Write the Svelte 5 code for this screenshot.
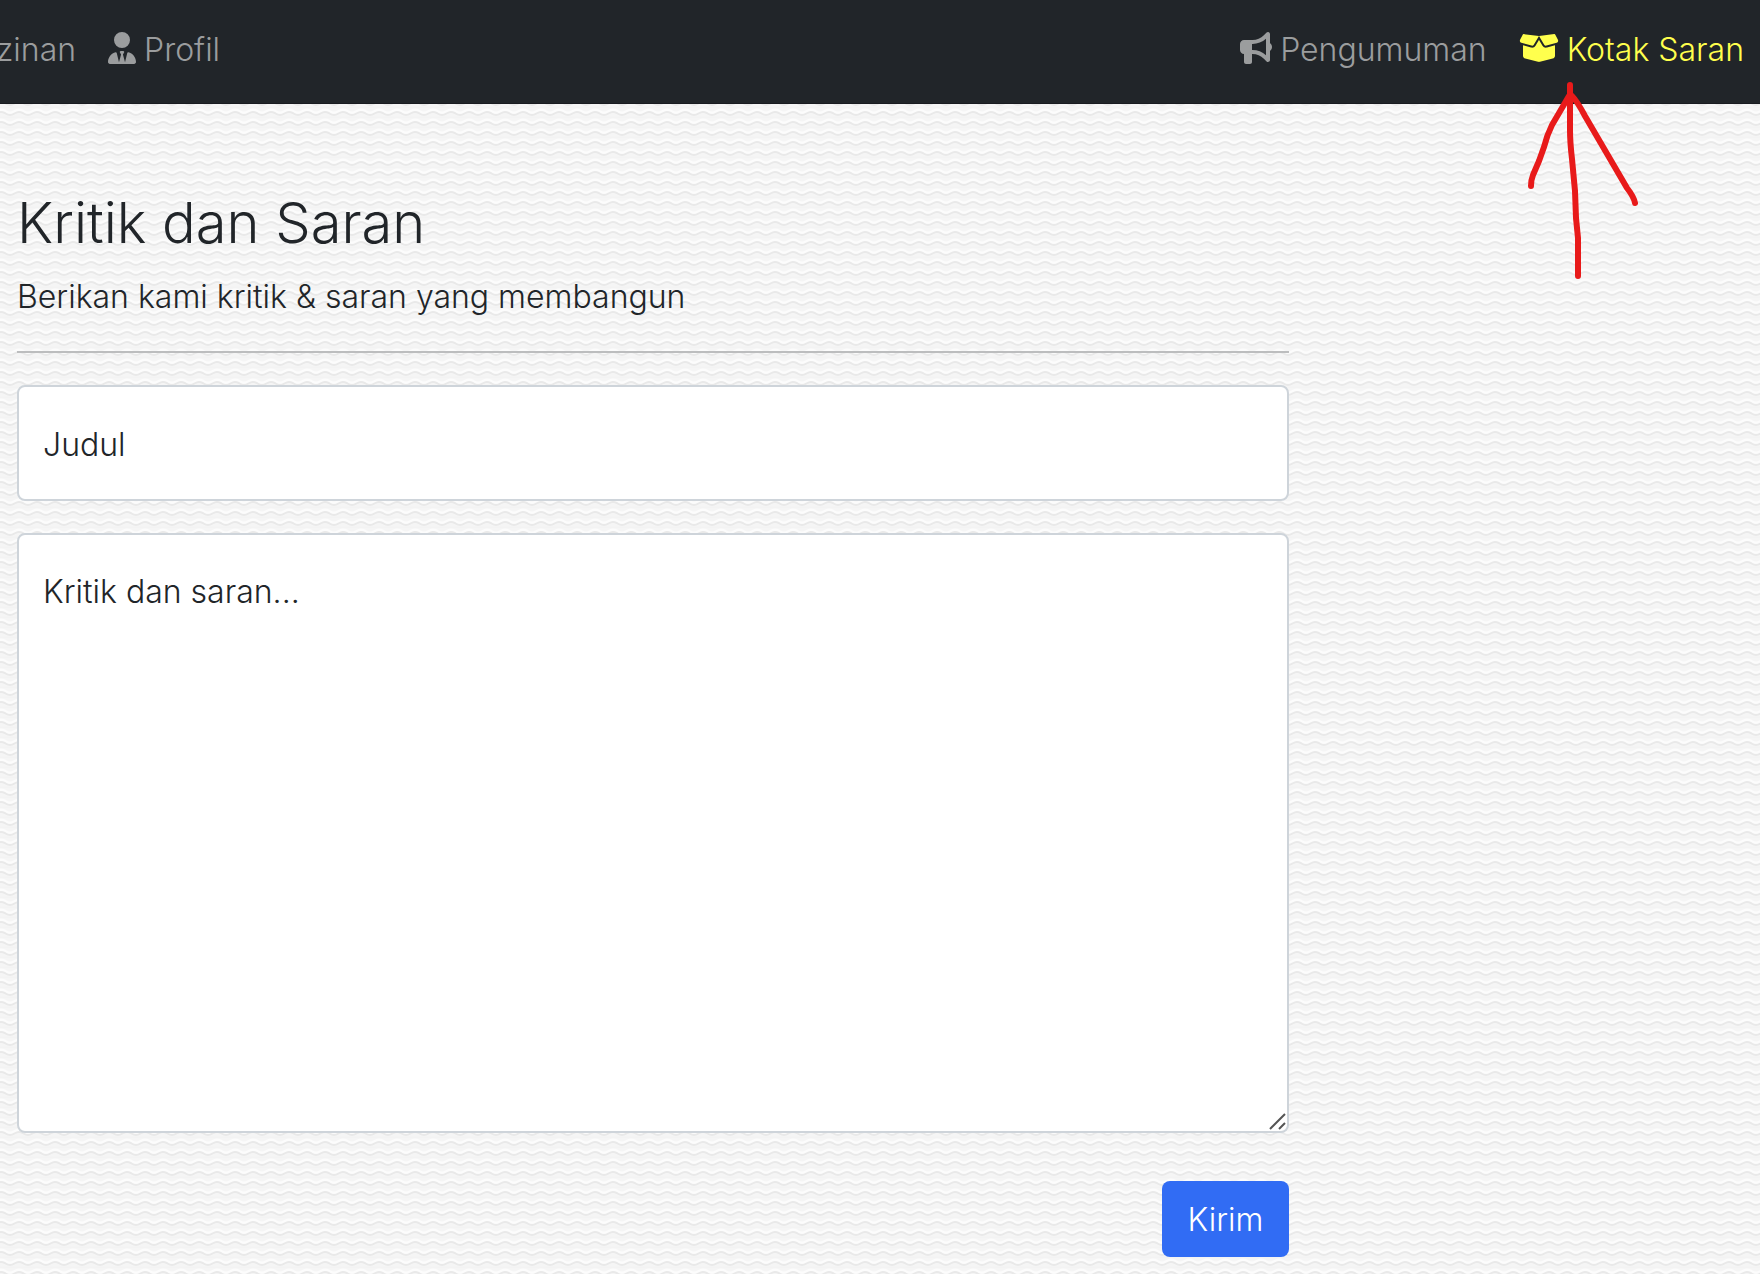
<script>
  let title = $state('');
  let message = $state('');
</script>

<svelte:head><title>Kritik dan Saran</title></svelte:head>

<div class="page">
  <nav class="navbar" aria-label="Menu utama">
    <div class="group start">
      <a class="link" href="#perizinan">zinan</a>
      <a class="link" href="#profil">
        <svg class="icon" viewBox="0 0 448 512" width="28" height="32" aria-hidden="true">
          <path d="M96 128a128 128 0 1 0 256 0A128 128 0 1 0 96 128zm94.500 200.200l18.600 31L175.800 483.100l-36-146.900c-2-8.100-9.800-13.400-17.900-11.300C51.900 342.400 0 405.800 0 481.300c0 17 13.800 30.700 30.700 30.700H162.500H168h112h5.500H417.300c17 0 30.700-13.800 30.700-30.700c0-75.500-51.900-138.900-121.900-156.400c-8.100-2-15.900 3.300-17.900 11.300l-36 146.900L238.900 359.200l18.600-31c6.400-10.700-1.300-24.200-13.700-24.200H224H204.300c-12.400 0-20.100 13.600-13.700 24.200z" />
        </svg>
        Profil
      </a>
    </div>
    <div class="group">
      <a class="link" href="#pengumuman">
        <svg class="icon" viewBox="0 0 512 512" width="32" height="32" aria-hidden="true">
          <path d="M480 32c0-12.900-7.800-24.600-19.800-29.600s-25.700-2.200-34.900 6.900L381.700 53c-48 48-113.100 75-181 75H192H160H64c-35.300 0-64 28.700-64 64v96c0 35.300 28.700 64 64 64V480c0 17.700 14.300 32 32 32h64c17.700 0 32-14.300 32-32V352h8.700c67.900 0 133 27 181 75l43.600 43.600c9.200 9.200 22.900 11.900 34.900 6.900s19.800-16.600 19.800-29.600V300.400c18.600-8.800 32-32.500 32-60.400s-13.400-51.600-32-60.400V32zm-64 76.700V240V371.300C357.200 317.800 280.500 288 200.700 288H192V192h8.700c79.800 0 156.500-29.800 215.300-83.300z" />
        </svg>
        Pengumuman
      </a>
      <a class="link active" href="#kotak-saran" aria-current="page">
        <svg class="icon" viewBox="0 0 640 512" width="40" height="32" aria-hidden="true">
          <path d="M58.900 42.100c3-6.100 9.600-9.600 16.300-8.700L320 64L564.800 33.400c6.700-.8 13.300 2.700 16.300 8.700l41.700 83.400c9 17.900-.6 39.600-19.800 45.100L439.600 217.300c-13.900 4-28.800-1.900-36.200-14.300L320 64L236.600 203c-7.400 12.400-22.300 18.300-36.200 14.300L37.100 170.600c-19.300-5.500-28.800-27.200-19.800-45.100L58.900 42.100zM321.100 128l54.900 91.400c14.900 24.800 44.600 36.600 72.500 28.600L576 211.600v167c0 22-15 41.200-36.400 46.600l-204.100 51c-10.200 2.600-20.900 2.600-31 0l-204.100-51C79 419.700 64 400.500 64 378.500v-167L191.600 248c27.800 8 57.600-3.800 72.500-28.600L318.900 128h2.200z" />
        </svg>
        Kotak Saran
      </a>
    </div>
    <svg class="arrow" viewBox="0 0 112 200" width="112" height="200" aria-hidden="true">
      <path d="M44 5V50Q44 62 46 79L49 111L50 138L52 158V196M43 16L26 45Q21 55 18 67L13 81L7 95Q5 100 5 106M46 16Q51 21 59 36L87 84L101 108Q108 117 109 123" />
    </svg>
  </nav>

  <main class="content">
    <h1>Kritik dan Saran</h1>
    <p>Berikan kami kritik &amp; saran yang membangun</p>
    <hr />
    <form onsubmit={(e) => e.preventDefault()}>
      <input class="field" type="text" aria-label="Judul" placeholder="Judul" bind:value={title} />
      <div class="area">
        <textarea class="field message" aria-label="Kritik dan saran" placeholder="Kritik dan saran..." bind:value={message}></textarea>
        <svg class="grip" viewBox="0 0 18 18" width="18" height="18" aria-hidden="true">
          <path d="M1 16L16 1M10 16L16 10" />
        </svg>
      </div>
      <button type="submit">Kirim</button>
    </form>
  </main>
</div>

<style>
  :global(body) {
    margin: 0;
    background: #f5f5f5;
  }
  .page {
    min-height: 100vh;
    box-sizing: border-box;
    font-family: Inter, 'Noto Sans', sans-serif;
    font-size: 32px;
    font-weight: 300;
    line-height: 48px;
    color: #212529;
    background: #f5f5f5 url("data:image/svg+xml,%3Csvg xmlns='http://www.w3.org/2000/svg' width='18' height='10'%3E%3Cg fill='none' stroke-width='2'%3E%3Cpath d='M-4 2C0 2 1 5 5 5S10 2 14 2S19 5 23 5' stroke='%23fcfcfc' stroke-width='3'/%3E%3Cpath d='M-4 4C0 4 1 7 5 7S10 4 14 4S19 7 23 7' stroke='%23e9e9e9'/%3E%3Cpath d='M-4 9H23' stroke='%23f2f2f2' stroke-width='1'/%3E%3C/g%3E%3C/svg%3E") 5px 8px;
  }
  .navbar {
    position: relative;
    display: flex;
    justify-content: space-between;
    align-items: center;
    box-sizing: border-box;
    height: 104px;
    padding: 0 16px 4px 0;
    background: #212529;
    border-bottom: 1px solid #191b20;
  }
  .group {
    display: flex;
    gap: 32px;
  }
  .start {
    margin-left: -4px;
  }
  .link {
    display: flex;
    align-items: center;
    gap: 8px;
    color: #9b9d9e;
    text-decoration: none;
    white-space: nowrap;
  }
  .active {
    color: #ffff4d;
  }
  .icon {
    display: block;
    margin-bottom: 3px;
    fill: currentColor;
  }
  .arrow {
    position: absolute;
    top: 80px;
    right: 122px;
    z-index: 1;
    fill: none;
    stroke: #e81a1a;
    stroke-width: 6;
    stroke-linecap: round;
    stroke-linejoin: round;
    pointer-events: none;
  }
  .content {
    box-sizing: border-box;
    width: 74%;
    padding: 85px 13px 16px 17px;
  }
  h1 {
    margin: 0 0 16px;
    font-size: 56px;
    font-weight: 300;
    line-height: 68px;
  }
  p {
    margin: 0 0 30px;
  }
  hr {
    height: 2px;
    margin: 0 0 32px;
    border: 0;
    background: #bcbdbe;
  }
  form {
    display: flex;
    flex-direction: column;
    gap: 32px;
  }
  .field {
    display: block;
    box-sizing: border-box;
    width: 100%;
    height: 116px;
    padding: 33px 24px 31px;
    border: 2px solid #ced4da;
    border-radius: 8px;
    background: #fff;
    color: inherit;
    font: inherit;
    outline: none;
  }
  .field::placeholder {
    color: #212529;
    opacity: 1;
  }
  .area {
    position: relative;
  }
  .message {
    height: 600px;
    resize: none;
  }
  .grip {
    position: absolute;
    right: 2px;
    bottom: 2px;
    fill: none;
    stroke: #555;
    stroke-width: 2;
    pointer-events: none;
  }
  button {
    align-self: flex-end;
    margin-top: 16px;
    padding: 15px 26px 13px;
    border: 0;
    border-radius: 8px;
    background: #316cf4;
    color: #fff;
    font: inherit;
    cursor: pointer;
  }
</style>
